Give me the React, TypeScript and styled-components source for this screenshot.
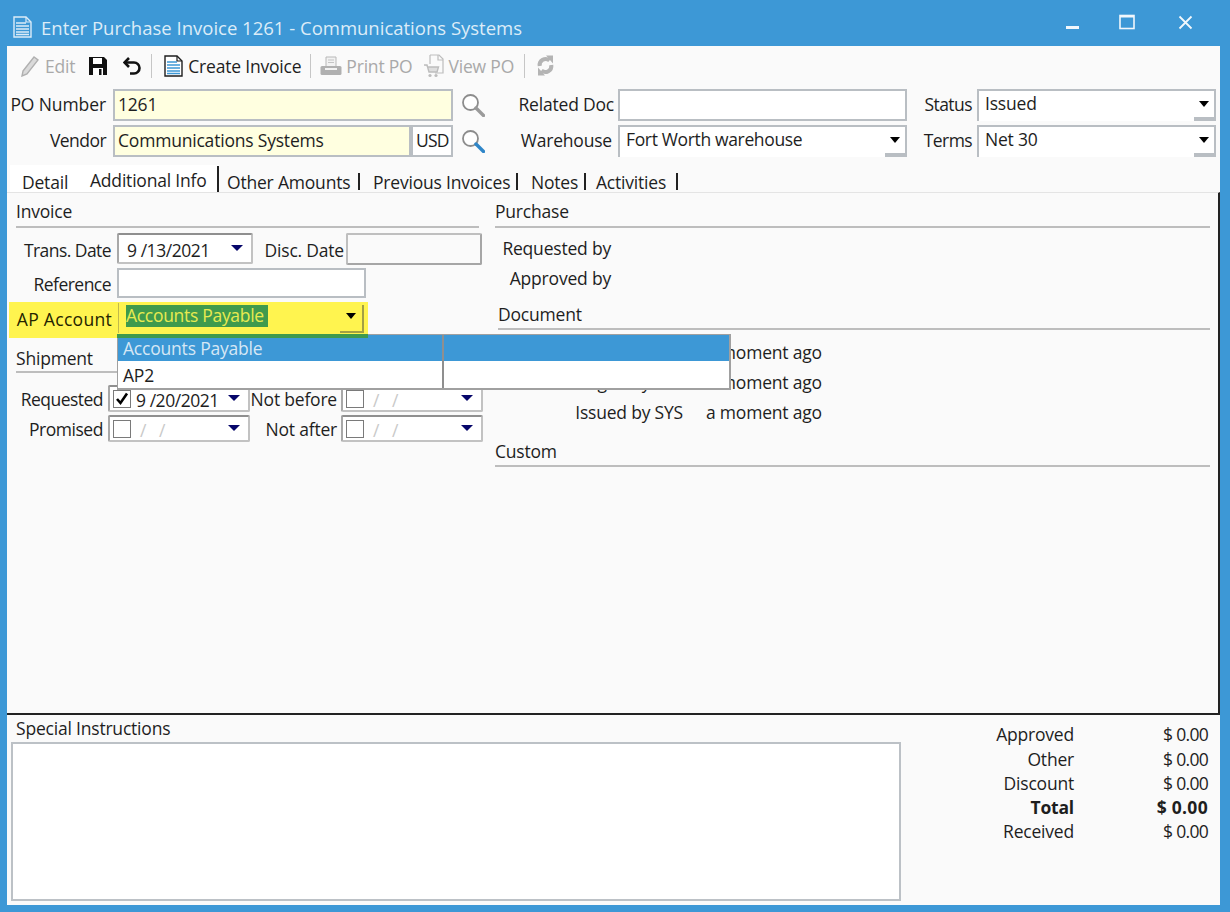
import React from "react";
import styled, { createGlobalStyle } from "styled-components";

const Global = createGlobalStyle`
  html, body { margin: 0; padding: 0; background: #3d98d6; overflow: hidden; }
  * { box-sizing: border-box; }
`;

const FONT = `"Open Sans", "Noto Sans", "Liberation Sans", sans-serif`;

const Window = styled.div`
  width: 1230px; height: 912px; background: #3d98d6; font-family: ${FONT};
  font-size: 17.5px; color: #1e1e1e; display: flex; flex-direction: column;
  padding: 0 10px 7px 7px; letter-spacing: -0.2px;
`;
const TitleBar = styled.div`
  height: 46px; flex: none; display: flex; align-items: center; margin-left: 6px;
  color: #dcecf8; font-size: 18.5px; padding-top: 8px; letter-spacing: 0;
`;
const TitleText = styled.span` margin-left: 9px; flex: 1; `;
const WinButtons = styled.div`
  display: flex; align-items: center; margin-right: 27px; margin-top: -10px;
`;
const WinBtn = styled.svg<{ $ml: number }>`
  margin-left: ${p => p.$ml}px; display: block;
`;
const Client = styled.div`
  flex: 1; background: #fafafa; display: flex; flex-direction: column; position: relative; min-height: 0;
`;
const Toolbar = styled.div`
  height: 42px; flex: none; display: flex; align-items: center; padding: 0 0 3px 13px;
`;
const ToolItem = styled.div<{ $ml?: number; $off?: boolean; $gap?: number }>`
  display: flex; align-items: center; gap: ${p => p.$gap ?? 5}px; margin-left: ${p => p.$ml ?? 0}px;
  color: ${p => (p.$off ? "#a9a9a9" : "#1e1e1e")}; white-space: nowrap;
`;
const ToolSep = styled.div<{ $ml: number }>`
  width: 1px; height: 24px; background: #c6c6c6; margin-left: ${p => p.$ml}px;
`;
const HeaderForm = styled.div`
  display: grid; flex: none; padding: 1px 0 0 3px; row-gap: 4px;
  grid-template-columns: 103px 340px 165px 289px 70px 239px;
  grid-auto-rows: 32px; align-items: center;
`;
const Label = styled.div<{ $pr?: number; $ls?: number }>`
  text-align: right; padding: 0 ${p => p.$pr ?? 7}px 3px 0; white-space: nowrap;
  letter-spacing: ${p => p.$ls ?? -0.2}px;
`;
const TextBox = styled.div<{ $bg?: string; $w?: number; $h?: number; $ls?: number }>`
  height: ${p => p.$h ?? 32}px; width: ${p => (p.$w ? `${p.$w}px` : "100%")}; flex: none;
  background: ${p => p.$bg ?? "#fff"}; border: 2px solid #b9bec3; padding: 0 0 3px 3px;
  display: flex; align-items: center; white-space: nowrap; letter-spacing: ${p => p.$ls ?? -0.2}px;
`;
const VendorGroup = styled.div` display: flex; height: 32px; `;
const SearchCell = styled.div`
  display: flex; align-items: center; justify-content: space-between; padding-left: 8px; height: 32px;
`;
const SearchLabel = styled.div<{ $pr?: number }>` padding: 0 ${p => p.$pr ?? 4}px 3px 0; white-space: nowrap; `;
const Combo = styled.div<{ $h?: number; $ls?: number }>`
  position: relative; height: ${p => p.$h ?? 32}px; background: #fff;
  border-top: 2px solid #b9bec3; border-left: 2px solid #b9bec3; padding: 0 0 6px 6px;
  display: flex; align-items: center; white-space: nowrap; letter-spacing: ${p => p.$ls ?? -0.2}px;
`;
const ComboButton = styled.div`
  position: absolute; right: 0; bottom: 0; top: 0; width: 22px;
  border-right: 2px solid #b9bec3; border-bottom: 2px solid #b9bec3;
  display: flex; align-items: center; justify-content: center; padding-bottom: 3px;
  &::before { content: ""; border-left: 5px solid transparent; border-right: 5px solid transparent; border-top: 6px solid #000; }
  &::after { content: ""; position: absolute; left: 0; bottom: 0; width: 100%; height: 2px; background: #b9bec3; }
`;
const Tabs = styled.div`
  display: flex; height: 27px; margin-top: 8px; padding-left: 3px; flex: none; align-items: stretch;
`;
const Tab = styled.div<{ $w: number; $pl: number; $active?: boolean; $plain?: boolean }>`
  width: ${p => p.$w}px; padding-left: ${p => p.$pl}px; position: relative; white-space: nowrap;
  display: flex; align-items: center; padding-top: ${p => (p.$active ? 3 : 6)}px;
  background: ${p => (p.$active || p.$plain ? "#fff" : "transparent")};
  &::after {
    content: ${p => (p.$plain ? "none" : '""')}; position: absolute; right: 0; width: 2px; background: #222;
    top: ${p => (p.$active ? 1 : 8)}px; bottom: ${p => (p.$active ? 0 : 2)}px;
  }
`;
const TabPanel = styled.div`
  height: 523px; flex: none; position: relative; padding: 8px 9px 0 9px;
  border-right: 2px solid #222; border-bottom: 2px solid #222; border-top: 1px solid #e4e4e4;
  display: grid; grid-template-columns: 463px 715px; column-gap: 16px; align-items: start;
`;
const Column = styled.div` display: flex; flex-direction: column; `;
const Heading = styled.div<{ $ml?: number; $mt?: number; $pb?: number }>`
  height: 27px; margin-left: ${p => p.$ml ?? 0}px; margin-top: ${p => p.$mt ?? 0}px;
  border-bottom: 2px solid #bdbdbd; display: flex; align-items: center; padding-bottom: ${p => p.$pb ?? 6}px;
`;
const FormRow = styled.div<{ $mt?: number; $ml?: number; $h: number }>`
  display: flex; align-items: center; height: ${p => p.$h}px;
  margin-top: ${p => p.$mt ?? 0}px; margin-left: ${p => p.$ml ?? 0}px;
`;
const RowLabel = styled.div<{ $w: number; $gap?: number; $dy?: number; $ls?: number }>`
  width: ${p => p.$w}px; flex: none; text-align: right; padding-right: ${p => p.$gap ?? 6}px; white-space: nowrap;
  padding-top: ${p => p.$dy ?? 0}px; letter-spacing: ${p => p.$ls ?? -0.2}px;
`;
const DateBox = styled.div<{ $w: number; $h: number }>`
  width: ${p => p.$w}px; height: ${p => p.$h}px; flex: none; background: #fff; border: 2px solid #c2c2c2;
  border-top-color: #8f8f8f; border-left-color: #a8a8a8; border-radius: 2px; display: flex; align-items: center;
  position: relative; white-space: nowrap; padding-left: 3px; gap: 4px;
`;
const DateText = styled.span<{ $ml?: number }>`
  letter-spacing: -0.45px; padding-top: 2px; margin-left: ${p => p.$ml ?? 1}px;
`;
const DateArrow = styled.span`
  position: absolute; right: 8px; top: 50%; margin-top: -4px; width: 0; height: 0;
  border-left: 6px solid transparent; border-right: 6px solid transparent; border-top: 6px solid #06066a;
`;
const CheckBox = styled.span`
  width: 18px; height: 18px; border: 1px solid #7a7a7a; background: #fff; display: flex; flex: none;
  align-items: center; justify-content: center;
`;
const Blank = styled.span` color: #c9c9c9; margin-left: 5px; letter-spacing: 4px; padding-top: 2px; `;
const Disabled = styled.div<{ $w: number }>`
  width: ${p => p.$w}px; height: 32px; flex: none; background: #fafafa; border: 2px solid #bfbfbf; border-radius: 2px;
  border-right-color: #a6a6a6; border-bottom-color: #a6a6a6;
`;
const Highlight = styled.div`
  display: flex; align-items: center; height: 36px; margin: 4px 0 0 -7px; width: 359px; padding: 0 0 2px 7px;
  background: #fff44f; color: #242400;
`;
const HighCombo = styled.div`
  position: relative; width: 246px; height: 30px; flex: none; align-self: flex-start; margin-top: 1px;
  border-left: 1px solid #c2b94a; padding: 2px 0 0 7px;
`;
const Selected = styled.span`
  background: #3f9a4d; color: #e8ea50; height: 22px; line-height: 21px; width: 142px; display: block;
  white-space: nowrap; letter-spacing: -0.3px;
`;
const HighButton = styled.div`
  position: absolute; right: 0; bottom: 0; top: 2px; width: 24px; border-right: 2px solid #a3a044; border-bottom: 2px solid #a3a044;
  display: flex; align-items: center; justify-content: center; padding-bottom: 4px;
  &::before { content: ""; border-left: 5px solid transparent; border-right: 5px solid transparent; border-top: 6px solid #000; }
`;
const Popup = styled.div`
  position: absolute; left: 110px; top: 141px; width: 614px; height: 56px; background: #fff;
  border: 1px solid #a0a0a0; border-right-width: 2px; border-bottom-width: 2px;
  display: flex; flex-direction: column;
`;
const PopupGlow = styled.div`
  position: absolute; left: -1px; top: -1px; width: 251px; height: 4px; background: #3f9a4d;
`;
const PopupRow = styled.div<{ $on?: boolean }>`
  height: ${p => (p.$on ? 26 : 27)}px; flex: none; display: grid; grid-template-columns: 326px 1fr; align-items: center; 
  background: ${p => (p.$on ? "#3d98d6" : "#fff")}; color: ${p => (p.$on ? "#d5e7f5" : "#1e1e1e")};
`;
const PopupCell = styled.div`
  padding-left: 5px; height: 100%; display: flex; align-items: center; border-right: 2px solid #8f8f8f;
`;
const Bottom = styled.div` flex: 1; display: flex; min-height: 0; `;
const Notes = styled.div` width: 894px; flex: none; padding-left: 4px; `;
const NotesLabel = styled.div` height: 27px; padding: 0 0 2px 5px; display: flex; align-items: center; `;
const NotesBox = styled.div` height: 159px; background: #fff; border: 2px solid #bcc1c6; `;
const Totals = styled.div`
  display: grid; grid-template-columns: 173px 134px; grid-template-rows: 26px 24px 24px 24px 24px;
  padding-top: 6px; align-items: center; align-content: start;
`;
const TotalLabel = styled.div<{ $b?: boolean }>` text-align: right; font-weight: ${p => (p.$b ? 700 : 400)}; `;
const TotalValue = styled.div<{ $b?: boolean }>`
  text-align: right; font-weight: ${p => (p.$b ? 700 : 400)}; letter-spacing: ${p => (p.$b ? 0.3 : -0.7)}px;
`;

const DocLines = ({ c = "#3d98d6", s = "#1e1e1e", f = "#fff", w = 19, h = 22 }: { c?: string; s?: string; f?: string; w?: number; h?: number }) => (
  <svg width={w} height={h} viewBox="0 0 19 22" fill="none">
    <path d="M1 1h12l5 5v15H1z" fill={f} stroke={s} strokeWidth="1.4" />
    <path d="M13 1v5h5" stroke={s} strokeWidth="1.2" />
    <path d="M3 7h10M3 10h13M3 13h13M3 16h13M3 18.5h13" stroke={c} strokeWidth="1.5" />
  </svg>
);
const Magnifier = ({ handle }: { handle: string }) => (
  <svg width="24" height="24" viewBox="0 0 24 24" fill="none">
    <circle cx="9.5" cy="9.5" r="7.5" stroke="#8c8c8c" strokeWidth="1.8" fill="#fff" />
    <path d="M15 15l7.5 7.5" stroke={handle} strokeWidth="3.4" strokeLinecap="round" />
  </svg>
);
const Arrow = () => <DateArrow />;
const Check = () => (
  <svg width="14" height="14" viewBox="0 0 14 14"><path d="M2 7l3.5 4L12 1.5" stroke="#000" strokeWidth="2.6" fill="none" /></svg>
);

export default function App() {
  return (
    <>
      <Global />
      <Window>
        <TitleBar>
          <DocLines c="#dcecf8" s="#dcecf8" f="transparent" />
          <TitleText>Enter Purchase Invoice 1261 - Communications Systems</TitleText>
          <WinButtons>
            <WinBtn $ml={0} width="13" height="13" viewBox="0 0 13 13"><rect x="0" y="10" width="13" height="3" fill="#f1f7fc" /></WinBtn>
            <WinBtn $ml={40} width="16" height="16" viewBox="0 0 16 16"><rect x="1" y="1.5" width="14" height="13" fill="none" stroke="#f1f7fc" strokeWidth="1.6" /><rect x="1" y="1" width="14" height="2.5" fill="#f1f7fc" /></WinBtn>
            <WinBtn $ml={43} width="15" height="15" viewBox="0 0 15 15"><path d="M1.5 1.5l12 12M13.5 1.5l-12 12" stroke="#f1f7fc" strokeWidth="1.8" /></WinBtn>
          </WinButtons>
        </TitleBar>
        <Client>
          <Toolbar>
            <ToolItem $off>
              <svg width="20" height="22" viewBox="0 0 20 22" fill="none"><path d="M3 16L14 2l4 3L7 19l-5 2z" fill="#dadada" stroke="#b0b0b0" strokeWidth="1.4" /></svg>
              <span>Edit</span>
            </ToolItem>
            <ToolItem $ml={13}>
              <svg width="20" height="20" viewBox="0 0 20 20"><path d="M1 1h15l3 3v15H1z" fill="#111" /><rect x="5" y="2" width="9" height="6" fill="#fff" /><rect x="5" y="12" width="10" height="7" fill="#fff" /><rect x="11" y="13" width="2.5" height="6" fill="#111" /></svg>
            </ToolItem>
            <ToolItem $ml={15}>
              <svg width="19" height="18" viewBox="0 0 19 18" fill="none"><path d="M6 1L1.5 5.5 6 10" stroke="#111" strokeWidth="2.6" /><path d="M2 5.5h9a5 5 0 0 1 0 11H7" stroke="#111" strokeWidth="2.6" /></svg>
            </ToolItem>
            <ToolSep $ml={9} />
            <ToolItem $ml={12}><DocLines /><span>Create Invoice</span></ToolItem>
            <ToolSep $ml={9} />
            <ToolItem $ml={9} $off $gap={4}>
              <svg width="22" height="20" viewBox="0 0 22 20"><path d="M6 1h10v10H6z" fill="#f2f2f2" stroke="#b8b8b8" /><path d="M8 4h6M8 6.5h6" stroke="#c4c4c4" /><rect x="0.5" y="10" width="21" height="9" rx="1.5" fill="#b0b0b0" /><rect x="5" y="12" width="12" height="2" fill="#f2f2f2" /></svg>
              <span>Print PO</span>
            </ToolItem>
            <ToolItem $ml={10} $off>
              <svg width="21" height="24" viewBox="0 0 21 24" fill="none"><path d="M7 1h9l4 4v14H12" stroke="#bdbdbd" strokeWidth="1.2" /><path d="M7 1v9" stroke="#bdbdbd" strokeWidth="1.2" /><path d="M15 1v5h5" stroke="#bdbdbd" strokeWidth="1.2" /><path d="M1 11h3l2 7h8l1.5-5H5" fill="#dedede" stroke="#bdbdbd" strokeWidth="1.4" /><circle cx="7" cy="21.5" r="1.6" fill="#bdbdbd" /><circle cx="13" cy="21.5" r="1.6" fill="#bdbdbd" /></svg>
              <span>View PO</span>
            </ToolItem>
            <ToolSep $ml={10} />
            <ToolItem $ml={11} $off>
              <svg width="19" height="21" viewBox="0 0 19 21" fill="none"><path d="M13.5 5.5A6 6 0 0 0 3.7 11" stroke="#b4b4b4" strokeWidth="4" /><path d="M5.5 15.5A6 6 0 0 0 15.3 10" stroke="#b4b4b4" strokeWidth="4" /><path d="M10 0.5l7 0 0 8z" fill="#b4b4b4" /><path d="M9 20.5l-7 0 0-8z" fill="#b4b4b4" /></svg>
            </ToolItem>
          </Toolbar>

          <HeaderForm>
            <Label $ls={-0.1}>PO Number</Label>
            <TextBox $bg="#ffffe0">1261</TextBox>
            <SearchCell><Magnifier handle="#9a9a9a" /><SearchLabel>Related Doc</SearchLabel></SearchCell>
            <TextBox />
            <Label $pr={5} $ls={-0.55}>Status</Label>
            <Combo>Issued<ComboButton /></Combo>

            <Label $ls={-0.55}>Vendor</Label>
            <VendorGroup>
              <TextBox $bg="#ffffe0" $w={298}>Communications Systems</TextBox>
              <TextBox $w={42} $ls={-0.8}>USD</TextBox>
            </VendorGroup>
            <SearchCell><Magnifier handle="#2f86c8" /><SearchLabel $pr={6}>Warehouse</SearchLabel></SearchCell>
            <Combo $ls={-0.35}>Fort Worth warehouse<ComboButton /></Combo>
            <Label $pr={5} $ls={-0.6}>Terms</Label>
            <Combo>Net 30<ComboButton /></Combo>
          </HeaderForm>

          <Tabs>
            <Tab $w={68} $pl={12} $plain>Detail</Tab>
            <Tab $w={141} $pl={12} $active>Additional Info</Tab>
            <Tab $w={141} $pl={8}>Other Amounts</Tab>
            <Tab $w={158} $pl={13}>Previous Invoices</Tab>
            <Tab $w={68} $pl={13}>Notes</Tab>
            <Tab $w={92} $pl={10}>Activities</Tab>
          </Tabs>

          <TabPanel>
            <Column>
              <Heading>Invoice</Heading>
              <FormRow $h={31} $mt={5}>
                <RowLabel $w={101} $dy={2} $ls={-0.56}>Trans. Date</RowLabel>
                <DateBox $w={136} $h={31}><DateText $ml={5}>9 /13/2021</DateText><Arrow /></DateBox>
                <RowLabel $w={93} $gap={2} $dy={2}>Disc. Date</RowLabel>
                <Disabled $w={136} />
              </FormRow>
              <FormRow $h={30} $mt={4}>
                <RowLabel $w={101} $dy={2} $ls={-0.53}>Reference</RowLabel>
                <TextBox $w={249} $h={30} />
              </FormRow>
              <Highlight>
                <RowLabel $w={102} $ls={0.3}>AP Account</RowLabel>
                <HighCombo><Selected>Accounts Payable</Selected><HighButton /></HighCombo>
              </Highlight>
              <Heading $mt={8} $pb={2}>Shipment</Heading>
              <FormRow $h={27} $mt={12}>
                <RowLabel $w={92} $gap={5} $ls={-0.53}>Requested</RowLabel>
                <DateBox $w={142} $h={27}><CheckBox><Check /></CheckBox><DateText>9 /20/2021</DateText><Arrow /></DateBox>
                <RowLabel $w={91} $gap={4}>Not before</RowLabel>
                <DateBox $w={142} $h={27}><CheckBox /><Blank>/ /</Blank><Arrow /></DateBox>
              </FormRow>
              <FormRow $h={27} $mt={3}>
                <RowLabel $w={92} $gap={5} $ls={-0.45}>Promised</RowLabel>
                <DateBox $w={142} $h={27}><CheckBox /><Blank>/ /</Blank><Arrow /></DateBox>
                <RowLabel $w={91} $gap={4}>Not after</RowLabel>
                <DateBox $w={142} $h={27}><CheckBox /><Blank>/ /</Blank><Arrow /></DateBox>
              </FormRow>
            </Column>
            <Column>
              <Heading>Purchase</Heading>
              <FormRow $h={30} $mt={5}><RowLabel $w={116} $gap={0}>Requested by</RowLabel></FormRow>
              <FormRow $h={30}><RowLabel $w={116} $gap={0}>Approved by</RowLabel></FormRow>
              <Heading $ml={3} $mt={10} $pb={4}>Document</Heading>
              <FormRow $h={30} $mt={7}><RowLabel $w={211} $gap={23}>Created by SYS</RowLabel>a moment ago</FormRow>
              <FormRow $h={30}><RowLabel $w={211} $gap={23}>Changed by SYS</RowLabel>a moment ago</FormRow>
              <FormRow $h={30}><RowLabel $w={211} $gap={23}>Issued by SYS</RowLabel>a moment ago</FormRow>
              <Heading $mt={13} $pb={4}>Custom</Heading>
            </Column>
            <Popup>
              <PopupRow $on><PopupCell>Accounts Payable</PopupCell></PopupRow>
              <PopupRow><PopupCell>AP2</PopupCell></PopupRow>
              <PopupGlow />
            </Popup>
          </TabPanel>

          <Bottom>
            <Notes>
              <NotesLabel>Special Instructions</NotesLabel>
              <NotesBox />
            </Notes>
            <Totals>
              <TotalLabel>Approved</TotalLabel><TotalValue>$ 0.00</TotalValue>
              <TotalLabel>Other</TotalLabel><TotalValue>$ 0.00</TotalValue>
              <TotalLabel>Discount</TotalLabel><TotalValue>$ 0.00</TotalValue>
              <TotalLabel $b>Total</TotalLabel><TotalValue $b>$ 0.00</TotalValue>
              <TotalLabel>Received</TotalLabel><TotalValue>$ 0.00</TotalValue>
            </Totals>
          </Bottom>
        </Client>
      </Window>
    </>
  );
}
